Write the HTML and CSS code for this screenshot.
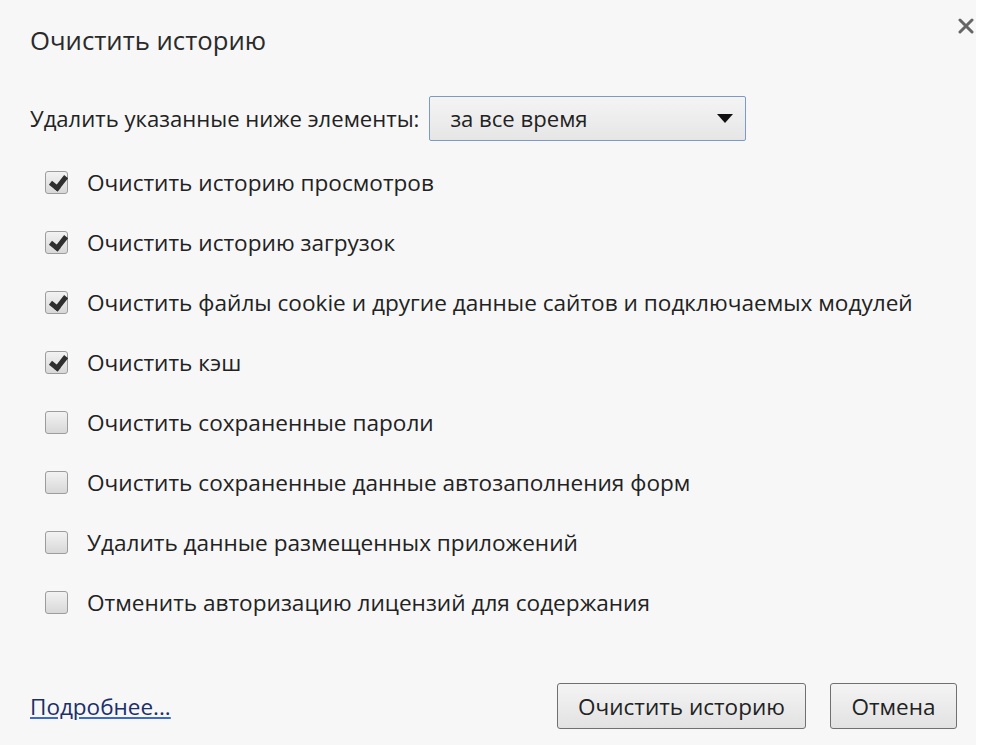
FILE: index.html
```html
<!DOCTYPE html>
<html lang="ru">
<head>
    <meta charset="UTF-8">
    <title>Очистить историю</title>
    <link rel="stylesheet" href="styles.css">
</head>
<body>
    <div class="dialog">
        <div class="header">
            <h1 class="title">Очистить историю</h1>
            <button class="close" aria-label="Закрыть">
                <svg width="16" height="16" viewBox="0 0 16 16">
                    <path d="M2 2 L14 14 M14 2 L2 14" stroke="#666" stroke-width="3" stroke-linecap="round"/>
                </svg>
            </button>
        </div>

        <div class="period">
            <span class="period-label">Удалить указанные ниже элементы:</span>
            <div class="select">
                <span>за все время</span>
                <svg class="arrow" width="16" height="9" viewBox="0 0 16 9">
                    <path d="M0 0 H16 L8 9 Z" fill="#111"/>
                </svg>
            </div>
        </div>

        <ul class="options">
            <li><span class="check checked"></span>Очистить историю просмотров</li>
            <li><span class="check checked"></span>Очистить историю загрузок</li>
            <li><span class="check checked"></span>Очистить файлы cookie и другие данные сайтов и подключаемых модулей</li>
            <li><span class="check checked"></span>Очистить кэш</li>
            <li><span class="check"></span>Очистить сохраненные пароли</li>
            <li><span class="check"></span>Очистить сохраненные данные автозаполнения форм</li>
            <li><span class="check"></span>Удалить данные размещенных приложений</li>
            <li><span class="check"></span>Отменить авторизацию лицензий для содержания</li>
        </ul>

        <div class="footer">
            <a class="more" href="#">Подробнее...</a>
            <div class="buttons">
                <button class="btn btn-main">Очистить историю</button>
                <button class="btn btn-cancel">Отмена</button>
            </div>
        </div>
    </div>
</body>
</html>
```

FILE: styles.css
```css
body {
    margin: 0;
    background-color: #ffffff;
    font-family: "Open Sans", "Noto Sans", Arial, sans-serif;
    color: #222;
}

.dialog {
    width: 976px;
    height: 745px;
    background-color: #f7f7f7;
    box-sizing: border-box;
    padding: 0 19px 0 30px;
    display: flex;
    flex-direction: column;
}

.header {
    display: flex;
    justify-content: space-between;
    align-items: flex-start;
    height: 80px;
}

.title {
    margin: 23px 0 0 0;
    font-size: 25.7px;
    font-weight: normal;
    line-height: 36px;
    color: #2a2a2a;
}

.close {
    margin: 18px -17px 0 0;
    padding: 0;
    border: none;
    background: none;
    cursor: pointer;
}

.period {
    display: flex;
    align-items: center;
    gap: 10px;
    height: 46px;
    margin-top: 15px;
    font-size: 22.1px;
}

.select {
    width: 317px;
    height: 45px;
    box-sizing: border-box;
    border: 1px solid #7d9ac6;
    border-radius: 2px;
    background: linear-gradient(#f4f4f4, #e6e6e6);
    display: flex;
    align-items: center;
    justify-content: space-between;
    padding: 0 12px 0 20px;
    font-size: 22.1px;
}

.options {
    list-style: none;
    margin: 11px 0 0 0;
    padding: 0 0 0 15px;
}

.options li {
    display: flex;
    align-items: center;
    gap: 19px;
    height: 60px;
    font-size: 22.6px;
}

.check {
    width: 23px;
    height: 23px;
    box-sizing: border-box;
    border: 1px solid #9c9c9c;
    border-radius: 3px;
    background: linear-gradient(#f2f2f2, #d8d8d8);
    position: relative;
    flex-shrink: 0;
}

.check.checked::after {
    content: "";
    position: absolute;
    left: 7px;
    top: 1px;
    width: 6px;
    height: 12px;
    border: solid #2e2e2e;
    border-width: 0 5px 5px 0;
    transform: rotate(38deg);
}

.footer {
    margin-top: auto;
    margin-bottom: 16px;
    display: flex;
    justify-content: space-between;
    align-items: center;
}

.more {
    color: #1b2f6b;
    font-size: 22.5px;
    text-decoration-color: #3a6ad0;
}

.buttons {
    display: flex;
    gap: 24px;
}

.btn {
    height: 46px;
    padding: 0;
    border: 1px solid #707070;
    border-radius: 3px;
    background: linear-gradient(#f4f4f4, #e2e2e2);
    font-family: inherit;
    font-size: 22.5px;
    color: #222;
    cursor: pointer;
}

.btn-main {
    width: 249px;
}

.btn-cancel {
    width: 127px;
}
```
